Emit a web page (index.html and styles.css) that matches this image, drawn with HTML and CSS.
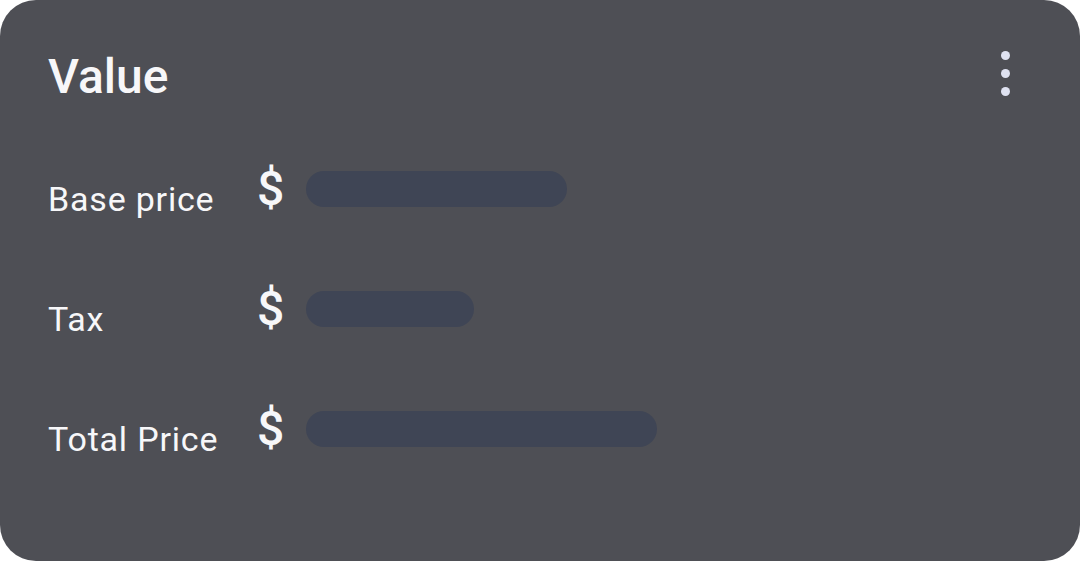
FILE: index.html
```html
<!DOCTYPE html>
<html>
<head>
<meta charset="utf-8">
<link rel="stylesheet" href="styles.css">
</head>
<body>
<div class="card">
  <div class="header">
    <h1 class="title">Value</h1>
    <button class="menu" aria-label="More">
      <span class="dot"></span><span class="dot"></span><span class="dot"></span>
    </button>
  </div>
  <div class="rows">
    <div class="row">
      <span class="label">Base price</span>
      <span class="currency">$</span>
      <span class="bar bar-base"></span>
    </div>
    <div class="row">
      <span class="label">Tax</span>
      <span class="currency">$</span>
      <span class="bar bar-tax"></span>
    </div>
    <div class="row">
      <span class="label">Total Price</span>
      <span class="currency">$</span>
      <span class="bar bar-total"></span>
    </div>
  </div>
</div>
</body>
</html>
```

FILE: styles.css
```css
* { box-sizing: border-box; }
html, body { margin: 0; padding: 0; background: #ffffff; }
body { font-family: Roboto, "Noto Sans", sans-serif; }

.card {
  width: 1080px;
  height: 561px;
  background: #4e4f55;
  border-radius: 36px;
  padding: 49px 48px 0 48px;
  color: #f7f7f9;
}

.header {
  display: flex;
  justify-content: space-between;
  align-items: flex-start;
}

.title {
  margin: 0;
  font-size: 48px;
  line-height: 56px;
  font-weight: 500;
}

.menu {
  border: 0;
  background: none;
  padding: 0;
  margin: 2px 22px 0 0;
  display: flex;
  flex-direction: column;
  gap: 9px;
}

.dot {
  width: 9px;
  height: 9px;
  border-radius: 50%;
  background: #dfe2f1;
}

.rows {
  margin-top: 66px;
  display: flex;
  flex-direction: column;
  gap: 84px;
}

.row {
  display: flex;
  align-items: flex-start;
  height: 36px;
}

.label {
  width: 209px;
  margin-top: 11px;
  font-size: 34px;
  line-height: 35px;
  font-weight: 400;
  letter-spacing: 0.8px;
}

.currency {
  width: 49px;
  margin-top: -6px;
  font-size: 48px;
  line-height: 48px;
  font-weight: 500;
}

.bar {
  height: 36px;
  border-radius: 18px;
  background: #3f4555;
}
.bar-base { width: 261px; }
.bar-tax { width: 168px; }
.bar-total { width: 351px; }
```
